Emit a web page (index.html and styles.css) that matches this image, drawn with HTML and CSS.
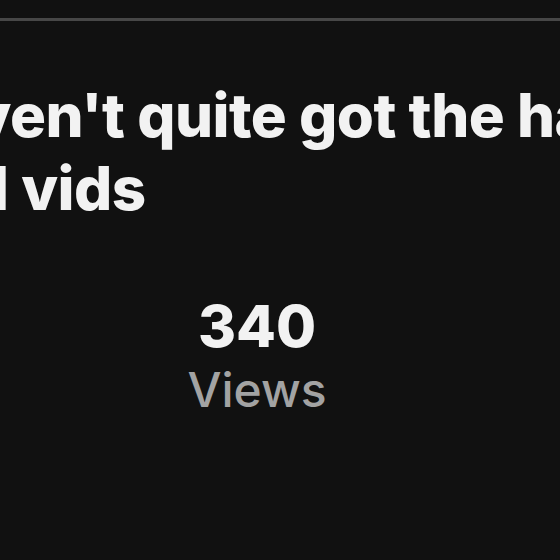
FILE: index.html
```html
<!DOCTYPE html>
<html lang="en">
<head>
  <meta charset="UTF-8" />
  <meta name="viewport" content="width=device-width, initial-scale=1.0" />
  <title>Video stats</title>
  <link rel="stylesheet" href="styles.css">
</head>
<body>
  <div class="page">
    <div class="divider"></div>
    <h1 class="caption">I haven't quite got the hang of these<br>in all vids</h1>
    <div class="stats">
      <div class="stat-value">340</div>
      <div class="stat-label">Views</div>
    </div>
  </div>
</body>
</html>
```

FILE: styles.css
```css
:root {
  --background: #111;
  --text: #f2f2f2;
  --muted: #a3a3a3;
}
html, body {
  margin: 0;
  height: 100%;
  background: var(--background);
  overflow: hidden;
}
body {
  font-family: Inter, "Noto Sans", sans-serif;
  color: var(--text);
}
.page {
  padding-top: 18px;
}
.divider {
  height: 3px;
  background: #474747;
}
/* the caption is wider than the frame, only its middle shows */
.caption {
  margin: 58px 0 0 -126px;
  font-size: 60px;
  font-weight: 800;
  line-height: 73px;
  letter-spacing: -0.5px;
  white-space: nowrap;
}
.stats {
  margin-top: 72px;
  padding-right: 46px;
  display: flex;
  flex-direction: column;
  align-items: center;
  gap: 11px;
}
.stat-value {
  font-size: 58px;
  font-weight: 800;
  line-height: 1;
}
.stat-label {
  font-size: 48px;
  font-weight: 500;
  line-height: 1;
  color: var(--muted);
}
```
